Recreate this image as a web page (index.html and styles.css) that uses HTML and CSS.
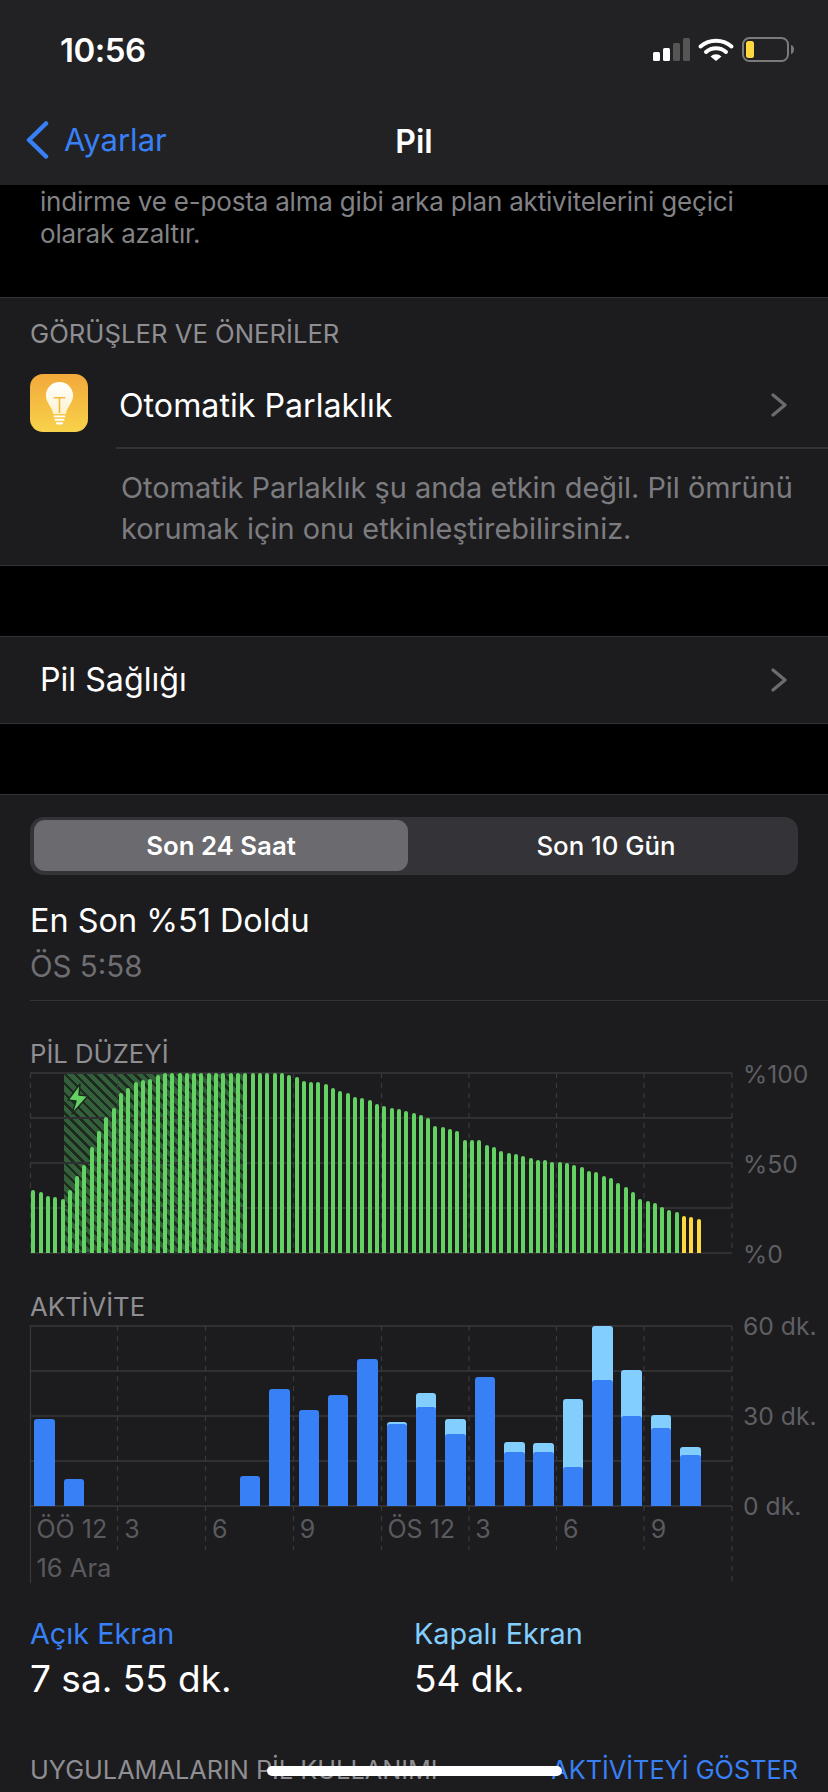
FILE: index.html
```html
<!DOCTYPE html>
<html lang="tr">
<head>
<meta charset="utf-8">
<title>Pil</title>
<link rel="stylesheet" href="styles.css">
</head>
<body>
<div class="screen">
  <header class="top">
    <div class="status">
      <span class="time">10:56</span>
      <svg class="status-icons" width="141" height="25" viewBox="0 0 141 25">
        <rect x="0" y="15" width="7" height="9" rx="1.5" fill="#fff"/>
        <rect x="10" y="11" width="7" height="13" rx="1.5" fill="#fff"/>
        <rect x="20" y="6" width="7" height="18" rx="1.5" fill="#555"/>
        <rect x="30" y="1" width="7" height="23" rx="1.5" fill="#555"/>
        <path d="M47.5 9.5a24 24 0 0 1 31 0" fill="none" stroke="#fff" stroke-width="4" stroke-linecap="round"/>
        <path d="M53 15a15 15 0 0 1 20 0" fill="none" stroke="#fff" stroke-width="4" stroke-linecap="round"/>
        <path d="M57.5 19.5 63 24l5.500-4.500a8 8 0 0 0-11 0z" fill="#fff"/>
        <rect x="90" y="1" width="45" height="23" rx="6.500" fill="none" stroke="#7a7a7a" stroke-width="2"/>
        <rect x="93" y="4" width="8" height="17" rx="2.500" fill="#ffd83f"/>
        <path d="M138 8c2 .5 3 2.300 3 4.500s-1 4-3 4.500z" fill="#7a7a7a"/>
      </svg>
    </div>
    <nav class="navbar">
      <a class="back">
        <svg width="24" height="38" viewBox="0 0 24 38"><path d="M21 2.500 4 19l17 16.500" fill="none" stroke="#3880f6" stroke-width="4.500" stroke-linecap="round" stroke-linejoin="round"/></svg>
        <span>Ayarlar</span>
      </a>
      <h1 class="title">Pil</h1>
    </nav>
  </header>

  <section class="intro">
    <p>indirme ve e-posta alma gibi arka plan aktivitelerini geçici<br>olarak azaltır.</p>
  </section>

  <section class="group suggestions">
    <h2 class="caption">GÖRÜŞLER VE ÖNERİLER</h2>
    <div class="suggest-row">
      <span class="app-icon">
        <svg width="29" height="44" viewBox="0 0 32 46" preserveAspectRatio="none">
          <defs><linearGradient id="bulb" x1="0" y1="0" x2="0" y2="1"><stop offset="0" stop-color="#fff"/><stop offset="1" stop-color="#fdf3d0"/></linearGradient></defs>
          <path d="M16 1C7.500 1 1 7.500 1 15c0 4.500 2 7.500 4 10.500 2 2.800 3.500 5.500 4 9h14c.5-3.500 2-6.200 4-9 2-3 4-6 4-10.500C31 7.500 24.500 1 16 1z" fill="url(#bulb)"/>
          <path d="M9.500 17.500h13M16 17.500v16" fill="none" stroke="#f5b93f" stroke-width="1.800"/>
          <rect x="9.500" y="36" width="13" height="2" rx="1" fill="#fff"/>
          <rect x="10.500" y="39.500" width="11" height="2" rx="1" fill="#fff"/>
          <rect x="12" y="43" width="8" height="2.500" rx="1.200" fill="#fff"/>
        </svg>
      </span>
      <div class="suggest-head">
        <span class="row-title">Otomatik Parlaklık</span>
        <svg class="chev chev-up" width="18" height="24" viewBox="0 0 18 24"><path d="M3 2l12 10L3 22" fill="none" stroke="#6b6b70" stroke-width="3.200" stroke-linecap="round" stroke-linejoin="round"/></svg>
      </div>
    </div>
    <p class="suggest-text">Otomatik Parlaklık şu anda etkin değil. Pil ömrünü<br>korumak için onu etkinleştirebilirsiniz.</p>
  </section>

  <section class="group health">
    <span class="row-title">Pil Sağlığı</span>
    <svg class="chev" width="18" height="24" viewBox="0 0 18 24"><path d="M3 2l12 10L3 22" fill="none" stroke="#6b6b70" stroke-width="3.200" stroke-linecap="round" stroke-linejoin="round"/></svg>
  </section>

  <section class="group usage">
    <div class="segment">
      <span class="seg seg-on">Son 24 Saat</span>
      <span class="seg seg-off">Son 10 Gün</span>
    </div>
    <div class="charged">
      <div class="charged-title">En Son %51 Doldu</div>
      <div class="charged-time">ÖS 5:58</div>
    </div>

    <h3 class="chart-label level-label">PİL DÜZEYİ</h3>
    <div class="chart">
      <div class="plot">
        <div class="hatch"></div>
        <svg class="grid" width="703" height="182" viewBox="0 0 703 182">
          <g class="grid-h">
            <path d="M0 1H702M0 46H702M0 91H702M0 136H702M0 181H702"/>
          </g>
          <g class="grid-v">
            <path d="M.5 1V181M87.500 1V181M175.500 1V181M263.500 1V181M351.500 1V181M439 1V181M526.500 1V181M614 1V181M702 1V181"/>
          </g>
        </svg>
        <svg class="bolt" width="24" height="32" viewBox="0 0 24 32"><path d="M14 1 2 17l8 1-4 13L22 13l-9-1z" fill="#63d263" stroke="#1c2a1e" stroke-width="1.500" stroke-linejoin="round"/></svg>
        <div class="level-bars">
          <i style="height:62.7px"></i><i style="height:60.7px"></i><i style="height:57.3px"></i><i style="height:55.7px"></i><i style="height:53.7px"></i><i style="height:62.7px"></i><i style="height:77px"></i><i style="height:88px"></i><i style="height:105.7px"></i><i style="height:122px"></i><i style="height:136.3px"></i><i style="height:145.3px"></i><i style="height:160px"></i><i style="height:165px"></i><i style="height:170.7px"></i><i style="height:172.7px"></i><i style="height:174.3px"></i><i style="height:178px"></i><i style="height:180px"></i>
          <i style="height:180px"></i><i style="height:180px"></i><i style="height:180px"></i><i style="height:180px"></i><i style="height:180px"></i><i style="height:180px"></i><i style="height:180px"></i><i style="height:180px"></i><i style="height:180px"></i><i style="height:180px"></i><i style="height:180px"></i><i style="height:180px"></i><i style="height:180px"></i><i style="height:180px"></i><i style="height:180px"></i><i style="height:180px"></i>
          <i style="height:178px"></i><i style="height:176px"></i><i style="height:172.3px"></i><i style="height:170.7px"></i><i style="height:170.7px"></i><i style="height:169px"></i><i style="height:165.3px"></i><i style="height:161.7px"></i><i style="height:160px"></i><i style="height:156.3px"></i><i style="height:154.7px"></i><i style="height:152.7px"></i><i style="height:149px"></i><i style="height:147.3px"></i><i style="height:145.3px"></i><i style="height:143.7px"></i>
          <i style="height:141.7px"></i><i style="height:140px"></i><i style="height:138.3px"></i><i style="height:134.7px"></i><i style="height:127.3px"></i><i style="height:125.7px"></i><i style="height:124px"></i><i style="height:122px"></i><i style="height:113px"></i><i style="height:113px"></i><i style="height:113px"></i><i style="height:107.7px"></i><i style="height:105.7px"></i><i style="height:102.3px"></i><i style="height:100.3px"></i><i style="height:98.7px"></i><i style="height:96.7px"></i><i style="height:95px"></i><i style="height:93px"></i><i style="height:93px"></i><i style="height:91.3px"></i><i style="height:91.3px"></i><i style="height:89.7px"></i><i style="height:87.7px"></i><i style="height:86px"></i><i style="height:82.3px"></i><i style="height:80.7px"></i><i style="height:77px"></i><i style="height:75.3px"></i><i style="height:69.7px"></i><i style="height:66.3px"></i><i style="height:60.7px"></i><i style="height:53.7px"></i><i style="height:51.7px"></i><i style="height:50px"></i><i style="height:46.3px"></i><i style="height:42.7px"></i><i style="height:41px"></i>
          <i class="low" style="height:37.3px"></i><i class="low" style="height:35.7px"></i><i class="low" style="height:34px"></i>
        </div>
      </div>
      <div class="y-axis"><span>%100</span><span>%50</span><span>%0</span></div>
    </div>

    <h3 class="chart-label activity-label">AKTİVİTE</h3>
    <div class="chart activity">
      <div class="plot">
        <svg class="grid" width="703" height="260" viewBox="0 0 703 260">
          <g class="grid-h">
            <path d="M0 1H702M0 46H702M0 91H702M0 136H702M0 181H702"/>
          </g>
          <g class="grid-v">
            <path d="M87.500 1V225M175.500 1V225M263.500 1V225M351.500 1V225M439 1V225M526.500 1V225M614 1V225M702 1V258"/>
          </g>
          <path class="grid-left" d="M.5 1V258"/>
        </svg>
        <div class="activity-bars">
          <b style="height:87px"></b>
          <b style="height:27px"></b>
          <b></b><b></b><b></b><b></b><b></b>
          <b style="height:30px"></b>
          <b style="height:117px"></b>
          <b style="height:96px"></b>
          <b style="height:111px"></b>
          <b style="height:147px"></b>
          <b class="off" style="height:84px"><u style="height:81.700px"></u></b>
          <b class="off" style="height:112.700px"><u style="height:99px"></u></b>
          <b class="off" style="height:87.300px"><u style="height:72px"></u></b>
          <b style="height:129px"></b>
          <b class="off" style="height:64px"><u style="height:54px"></u></b>
          <b class="off" style="height:62.700px"><u style="height:54px"></u></b>
          <b class="off" style="height:106.700px"><u style="height:39px"></u></b>
          <b class="off" style="height:180px"><u style="height:125.700px"></u></b>
          <b class="off" style="height:136px"><u style="height:90px"></u></b>
          <b class="off" style="height:91.300px"><u style="height:78px"></u></b>
          <b class="off" style="height:59px"><u style="height:51px"></u></b>
        </div>
        <div class="x-axis">
          <span>ÖÖ 12</span><span>3</span><span>6</span><span>9</span><span>ÖS 12</span><span>3</span><span>6</span><span>9</span>
        </div>
        <div class="x-date">16 Ara</div>
      </div>
      <div class="y-axis"><span>60 dk.</span><span>30 dk.</span><span>0 dk.</span></div>
    </div>

    <div class="totals">
      <div class="total">
        <div class="total-name on-name">Açık Ekran</div>
        <div class="total-value">7 sa. 55 dk.</div>
      </div>
      <div class="total">
        <div class="total-name off-name">Kapalı Ekran</div>
        <div class="total-value">54 dk.</div>
      </div>
    </div>

    <div class="apps-head">
      <span class="apps-title">UYGULAMALARIN PİL KULLANIMI</span>
      <a class="apps-link">AKTİVİTEYİ GÖSTER</a>
    </div>
  </section>
  <div class="home"></div>
</div>
</body>
</html>
```

FILE: styles.css
```css
* { box-sizing: border-box; }
html, body { margin: 0; padding: 0; background: #000; }
body { font-family: Inter, "Noto Sans", sans-serif; color: #fff; }
h1, h2, h3, p { margin: 0; font: inherit; }

.screen { position: relative; width: 828px; height: 1792px; overflow: hidden; background: #000; }

.top { height: 185px; background: #222224; }
.status { display: flex; justify-content: space-between; align-items: flex-start; height: 102px; padding: 38px 34px 0 60px; }
.time { font-size: 33px; line-height: 24px; font-weight: 600; letter-spacing: -.5px; }
.status-icons { margin-top: -1px; }
.navbar { position: relative; display: flex; align-items: center; justify-content: center; height: 52px; }
.back { position: absolute; left: 25px; top: 19px; display: flex; align-items: center; gap: 15px; color: #3880f6; font-size: 31px; line-height: 38px; }
.title { font-size: 32px; font-weight: 600; line-height: 38px; margin-top: 27px; }

.intro { height: 112px; padding: 1px 40px 0; font-size: 26px; line-height: 32px; letter-spacing: -.19px; color: #828286; }

.group { background: #1c1c1e; border-top: 1px solid #333335; border-bottom: 1px solid #333335; }

.suggestions { height: 269px; margin-bottom: 70px; }
.caption { height: 72px; padding: 0 30px; font-size: 25.700px; line-height: 72px; color: #8e8e93; }
.suggest-row { display: flex; gap: 28px; height: 79px; padding-left: 30px; }
.app-icon { display: flex; align-items: center; justify-content: center; flex: none; width: 58px; height: 58px; margin-top: 4px; border-radius: 13px; background: linear-gradient(#f2a93b, #f8d24a); }
.suggest-head { display: flex; align-items: center; justify-content: space-between; flex: 1; padding: 0 40px 5px 3px; border-bottom: 2px solid #333335; }
.row-title { font-size: 32.200px; line-height: 40px; }
.chev { flex: none; }
.chev-up { margin-top: -2px; }
.suggest-text { padding: 18px 20px 0 121px; font-size: 28.900px; line-height: 41px; white-space: nowrap; color: #7c7c80; }

.health { display: flex; align-items: center; justify-content: space-between; height: 88px; margin-bottom: 70px; padding: 0 40px 0 40px; }

.usage { height: 1000px; padding-top: 22px; border-bottom: 0; }
.segment { display: flex; height: 58px; margin: 0 30px; padding: 3px 4px 4px; border-radius: 14px; background: #333338; }
.seg { display: flex; align-items: center; justify-content: center; flex: 1; font-size: 25.800px; font-weight: 500; border-radius: 11px; }
.seg-on { flex: none; width: 374px; background: #6a6a6f; font-weight: 600; }
.seg-off { padding-left: 10px; }

.charged { height: 126px; margin-left: 30px; padding: 24px 0 0 0; border-bottom: 1px solid #333335; }
.charged-title { font-size: 32.400px; line-height: 44px; }
.charged-time { font-size: 29.500px; line-height: 44px; padding-top: 1px; color: #6e6e73; }

.chart-label { padding-left: 30px; font-size: 25.700px; line-height: 32px; color: #8e8e93; }
.level-label { margin-top: 37px; height: 35px; }
.activity-label { margin-top: 37px; height: 35px; }

.chart { display: flex; margin-left: 30px; height: 181px; }
.plot { position: relative; width: 702px; height: 181px; flex: none; }
.grid { position: absolute; left: 0; top: -1px; overflow: visible; }
.grid-h path { fill: none; stroke: #303033; stroke-width: 2; }
.grid-v path { fill: none; stroke: #39393c; stroke-width: 1.200; stroke-dasharray: 5 5; }
.grid-left { fill: none; stroke: #39393c; stroke-width: 1.200; }
.hatch { position: absolute; left: 34px; top: 0; width: 181px; height: 180px; background: repeating-linear-gradient(45deg, #1d2a1f 0 2.500px, #33603a 2.500px 7px); }
.bolt { position: absolute; left: 36px; top: 10px; }

.level-bars { position: absolute; left: 1.300px; bottom: 1px; display: flex; align-items: flex-end; gap: 3.320px; height: 180px; }
.level-bars i { display: block; flex: none; width: 4px; border-radius: 2px 2px 0 0; background: #63d263; }
.level-bars i.low { background: #ffd83f; }

.y-axis { display: flex; flex-direction: column; justify-content: space-between; height: 212px; margin: -15.500px 0 0 11px; font-size: 24.700px; line-height: 32px; color: #5f5f63; white-space: nowrap; }
.activity .y-axis { margin-top: -16.500px; }

.activity .plot { height: 181px; }
.activity-bars { position: absolute; left: 4.300px; bottom: 1px; display: flex; align-items: flex-end; gap: 8.870px; height: 180px; }
.activity-bars b { display: flex; align-items: flex-end; flex: none; width: 20.500px; border-radius: 3px 3px 0 0; background: #3880f6; overflow: hidden; }
.activity-bars b.off { background: #82cfff; }
.activity-bars u { display: block; width: 100%; border-radius: 3px 3px 0 0; background: #3880f6; }

.x-axis { position: absolute; left: 0; top: 187px; display: grid; grid-template-columns: repeat(8, 87.750px); font-size: 25px; line-height: 32px; color: #5a5a5e; }
.x-axis span { padding-left: 6.500px; white-space: nowrap; }
.x-date { position: absolute; left: 6.500px; top: 226px; font-size: 25.500px; line-height: 32px; color: #5a5a5e; }

.totals { display: flex; margin-top: 107px; padding-left: 30px; }
.total { width: 384px; }
.total-name { font-size: 28.800px; line-height: 40px; }
.on-name { color: #3880f6; }
.off-name { color: #82cfff; }
.total-value { font-size: 37px; line-height: 50px; margin-top: 0; }

.apps-head { display: flex; justify-content: space-between; margin-top: 50px; padding: 0 30px 0 30px; font-size: 25.300px; line-height: 32px; white-space: nowrap; }
.apps-title { color: #8e8e93; }
.apps-link { color: #3880f6; }

.home { position: absolute; left: 267px; top: 1766px; width: 295px; height: 10px; border-radius: 5px; background: #fff; }
```
